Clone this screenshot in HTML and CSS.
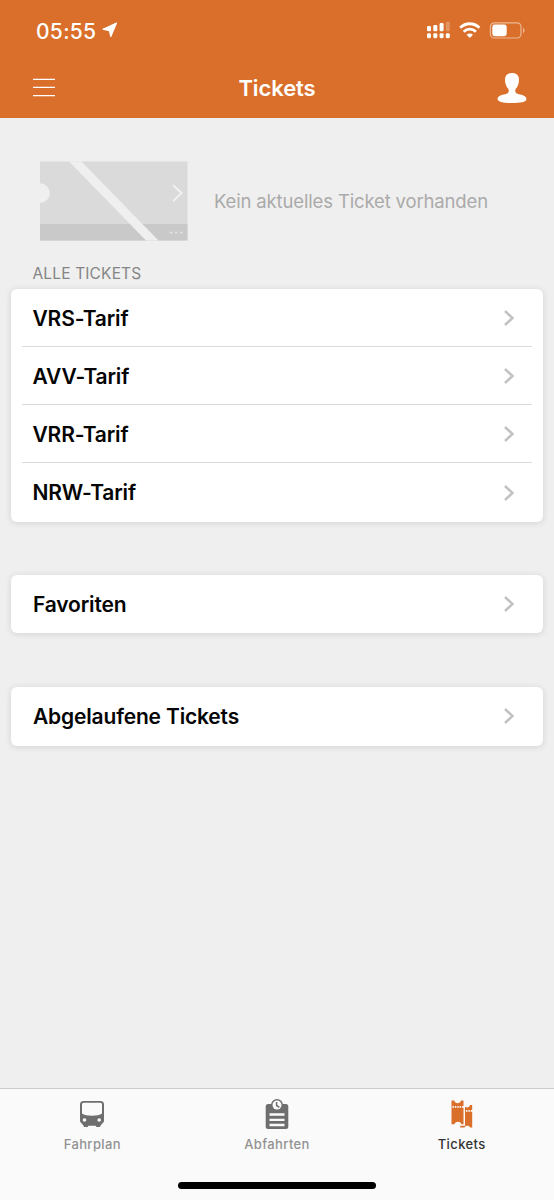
FILE: index.html
```html
<!DOCTYPE html>
<html lang="de">
<head>
<meta charset="utf-8">
<title>Tickets</title>
<link rel="stylesheet" href="styles.css">
</head>
<body>
<div class="app">
  <header class="header">
    <div class="status">
      <span class="time">05:55</span>
      <svg class="location" width="16" height="16" viewBox="0 0 16 16"><path d="M14.500 1 8.800 14.500 7.400 8.700 1 7.200Z" fill="#fff" stroke="#fff" stroke-width="1.200" stroke-linejoin="round"/></svg>
      <svg class="signals" width="100" height="20" viewBox="0 0 100 20">
        <g fill="#fff">
          <rect x="1" y="6" width="4" height="5.3" rx="1.2"/><rect x="7.3" y="5" width="4" height="6.3" rx="1.2"/><rect x="13.6" y="3" width="4" height="8.3" rx="1.2"/><rect x="19.8" y="1.8" width="4" height="9.5" rx="1.2" opacity=".25"/>
          <rect x="1" y="13.2" width="4" height="5" rx="1.4"/><rect x="7.3" y="13.2" width="4" height="5" rx="1.4"/><rect x="13.6" y="13.2" width="4" height="5" rx="1.4"/><rect x="19.8" y="13.2" width="4" height="5" rx="1.4"/>
        </g>
        <g fill="none" stroke="#fff" stroke-width="2.8"><path d="M34.2 7.8c5.5-5.4 13.7-5.4 19.2 0"/><path d="M37.7 11.7c3.4-3.4 8.8-3.4 12.2 0"/></g>
        <path d="M40.6 14.7c1.8-1.7 4.6-1.7 6.4 0l-3.2 3.4Z" fill="#fff"/>
        <rect x="64.4" y="2.8" width="30.6" height="15.2" rx="4" fill="none" stroke="#fff" stroke-opacity=".5" stroke-width="1.2"/>
        <rect x="66.3" y="4.6" width="14.4" height="11.6" rx="2.4" fill="#fff"/>
        <path d="M97 7.8c2 .8 2 4.4 0 5.2Z" fill="#fff" opacity=".5"/>
      </svg>
    </div>
    <nav class="navbar">
      <svg class="menu" width="24" height="22" viewBox="0 0 24 22"><path d="M1 3.4H23M1 11.4H23M1 19.6H23" stroke="#fff" stroke-width="1.3"/></svg>
      <h1 class="title">Tickets</h1>
      <svg class="profile" width="30" height="32" viewBox="0 0 30 32"><path d="M15 1C10.400 1 8 3.400 8 7.600c0 3.800 1 6.800 3 8.900 1.200 1.300 1 4.100-.8 5C6.600 22.800.6 23.200.6 27.200c0 2.700 6.400 3.800 14.400 3.800s14.400-1.100 14.400-3.800c0-4-6-4.400-9.600-5.700-1.800-.9-2-3.700-.8-5 2-2.100 3-5.100 3-8.900C22 3.400 19.600 1 15 1Z" fill="#fff"/></svg>
    </nav>
  </header>
  <main class="content">
    <section class="current">
      <svg class="ticket" width="148" height="80" viewBox="0 0 148 80">
        <g transform="translate(0 .6)">
          <path d="M0 0H147.500V79H0Z" fill="#dadada"/><path d="M0 62.500H147.500V79H0Z" fill="#c9c9c9"/>
          <circle cx="0" cy="31.500" r="9.800" fill="#efefef"/>
          <path d="M29 0H41.500L118.500 79H106Z" fill="#efefef"/>
          <path d="M133 23.500 141.500 31.500 133 39.500" fill="none" stroke="#f4f4f4" stroke-width="1.600"/>
          <path d="M130 71h2.400m2.600 0h2.400m2.600 0h2.400" stroke="#e4e4e4" stroke-width="1.600"/>
        </g>
      </svg>
      <p class="empty">Kein aktuelles Ticket vorhanden</p>
    </section>
    <h2 class="caption">ALLE TICKETS</h2>
    <ul class="card tariffs">
      <li class="row"><span class="label">VRS-Tarif</span><svg class="chevron" width="12" height="18" viewBox="0 0 12 18"><path d="M2 2 9.500 9 2 16"/></svg></li>
      <li class="row"><span class="label">AVV-Tarif</span><svg class="chevron" width="12" height="18" viewBox="0 0 12 18"><path d="M2 2 9.500 9 2 16"/></svg></li>
      <li class="row"><span class="label">VRR-Tarif</span><svg class="chevron" width="12" height="18" viewBox="0 0 12 18"><path d="M2 2 9.500 9 2 16"/></svg></li>
      <li class="row"><span class="label">NRW-Tarif</span><svg class="chevron" width="12" height="18" viewBox="0 0 12 18"><path d="M2 2 9.500 9 2 16"/></svg></li>
    </ul>
    <div class="card row"><span class="label">Favoriten</span><svg class="chevron" width="12" height="18" viewBox="0 0 12 18"><path d="M2 2 9.500 9 2 16"/></svg></div>
    <div class="card row"><span class="label">Abgelaufene Tickets</span><svg class="chevron" width="12" height="18" viewBox="0 0 12 18"><path d="M2 2 9.500 9 2 16"/></svg></div>
  </main>
  <footer class="footer">
    <nav class="tabs">
      <a class="tab">
        <svg width="32" height="32" viewBox="0 0 32 32"><path d="M7.500 3H24.500Q28 3 28 6.500V23.500L25 27 23.800 29H20.500L19.500 27.700H12.500L11.500 29H8.200L7 27 4 23.500V6.500Q4 3 7.500 3Z" fill="#6e6e6e"/><path d="M7.500 4.800H24.500Q26 4.800 26 6.500V15.500C22.500 18.500 9.500 18.500 6 15.500V6.500Q6 4.800 7.500 4.800Z" fill="#fafafa"/><circle cx="8.500" cy="22" r="1.800" fill="#fafafa"/><circle cx="23.200" cy="22" r="1.800" fill="#fafafa"/></svg>
        <span class="tab-label">Fahrplan</span>
      </a>
      <a class="tab">
        <svg width="32" height="32" viewBox="0 0 32 32"><rect x="4.700" y="6" width="22.600" height="25" rx="2.500" fill="#6e6e6e"/><circle cx="16" cy="7" r="6" fill="#6e6e6e"/><circle cx="16" cy="7" r="4.500" fill="#fafafa"/><path d="M15.600 4V7.500l2.800 1.800" fill="none" stroke="#6e6e6e" stroke-width="1.500"/><path d="M8.500 16.500H23.500M8.500 21.800H23.500M8.500 27H23.500" stroke="#fafafa" stroke-width="2.300"/></svg>
        <span class="tab-label">Abfahrten</span>
      </a>
      <a class="tab active">
        <svg width="32" height="32" viewBox="0 0 32 32"><g fill="#d96f2b"><path d="M5.500 2.500H8.300C9 6 14.300 6 15 2.500H17.500V8H5.500Z"/><path d="M5.500 9.800H17.500V26.300H15.500C14.500 23 9.500 23 8.300 26.300H5.500Z"/><path d="M19 8.700C21 10 23.500 9.500 24 7H26.200V12H19Z"/><path d="M19 13.800H26.200V29.500H24C23.500 27 19 27 18.500 29.500H14.200V27.700H19Z"/></g><path d="M5.500 8.900H17.500M19 12.900H26.200" stroke="#d96f2b" stroke-width="1.800" stroke-dasharray="1 1.400"/></svg>
        <span class="tab-label">Tickets</span>
      </a>
    </nav>
    <div class="home-indicator"></div>
  </footer>
</div>
</body>
</html>
```
FILE: styles.css
```css
* { box-sizing: border-box; }
body { margin: 0; background: #efefef; font-family: Inter, "Liberation Sans", sans-serif; }
.app { width: 554px; height: 1200px; display: flex; flex-direction: column; }
.header { height: 118px; background: #d96f2b; color: #fff; flex: none; }
.status { height: 60px; padding: 2px 28px 0 36px; display: flex; align-items: center; }
.time { font-size: 21px; font-weight: 500; letter-spacing: .3px; width: 65px; white-space: nowrap; }
.location { margin-left: 1px; margin-top: -2px; }
.signals { margin-left: auto; margin-top: -2px; }
.navbar { height: 56px; padding: 0 27px 0 32px; display: grid; grid-template-columns: 80px 1fr 80px; align-items: center; }
.menu { margin-top: -2px; }
.title { margin: 0 0 0 -5px; text-align: center; font-size: 22px; line-height: 28px; font-weight: 600; letter-spacing: -.1px; }
.profile { justify-self: end; }
.content { flex: 1; padding: 43px 11px 0; }
.current { display: flex; align-items: center; height: 80px; padding-left: 29px; }
.ticket { flex: none; }
.empty { margin: 0 0 0 26px; font-size: 18.500px; letter-spacing: -.15px; color: #aaa; white-space: nowrap; }
.caption { margin: 21px 0 4px 21.500px; height: 23px; line-height: 23px; font-size: 15.500px; letter-spacing: .15px; font-weight: 400; color: #858585; }
.card { background: #fff; border-radius: 6px; box-shadow: 0 1px 6px rgba(70, 40, 50, .15); }
.tariffs { list-style: none; margin: 0 0 52.500px; padding: 0; height: 233px; }
.row { display: flex; align-items: center; justify-content: space-between; height: 58.500px; padding: 0 28px 0 22px; }
.tariffs .row { height: 58.125px; margin: 0 11px; padding: 0 17px 0 10.500px; border-bottom: 1px solid #dbdbdb; }
.tariffs .row:last-child { border-bottom: 0; }
.row.card { margin-bottom: 54px; }
.label { padding-top: 2px; font-size: 21px; line-height: 28px; font-weight: 600; letter-spacing: -.17px; color: #050505; }
.chevron { fill: none; stroke: #c2c2c4; stroke-width: 2.500; }
.tariffs .chevron { margin-top: 1px; }
.footer { height: 112px; flex: none; border-top: 1px solid #cacaca; background: #fafafa; display: flex; flex-direction: column; align-items: center; }
.tabs { width: 554px; height: 93px; display: grid; grid-template-columns: repeat(3, 1fr); flex: none; }
.tab { display: flex; flex-direction: column; align-items: center; padding-top: 9px; color: #929292; }
.tab-label { font-size: 13px; font-weight: 500; line-height: 18px; margin-top: 5px; letter-spacing: .38px; }
.active { color: #333; }
.home-indicator { width: 198px; height: 7px; border-radius: 4px; background: #000; }
```
